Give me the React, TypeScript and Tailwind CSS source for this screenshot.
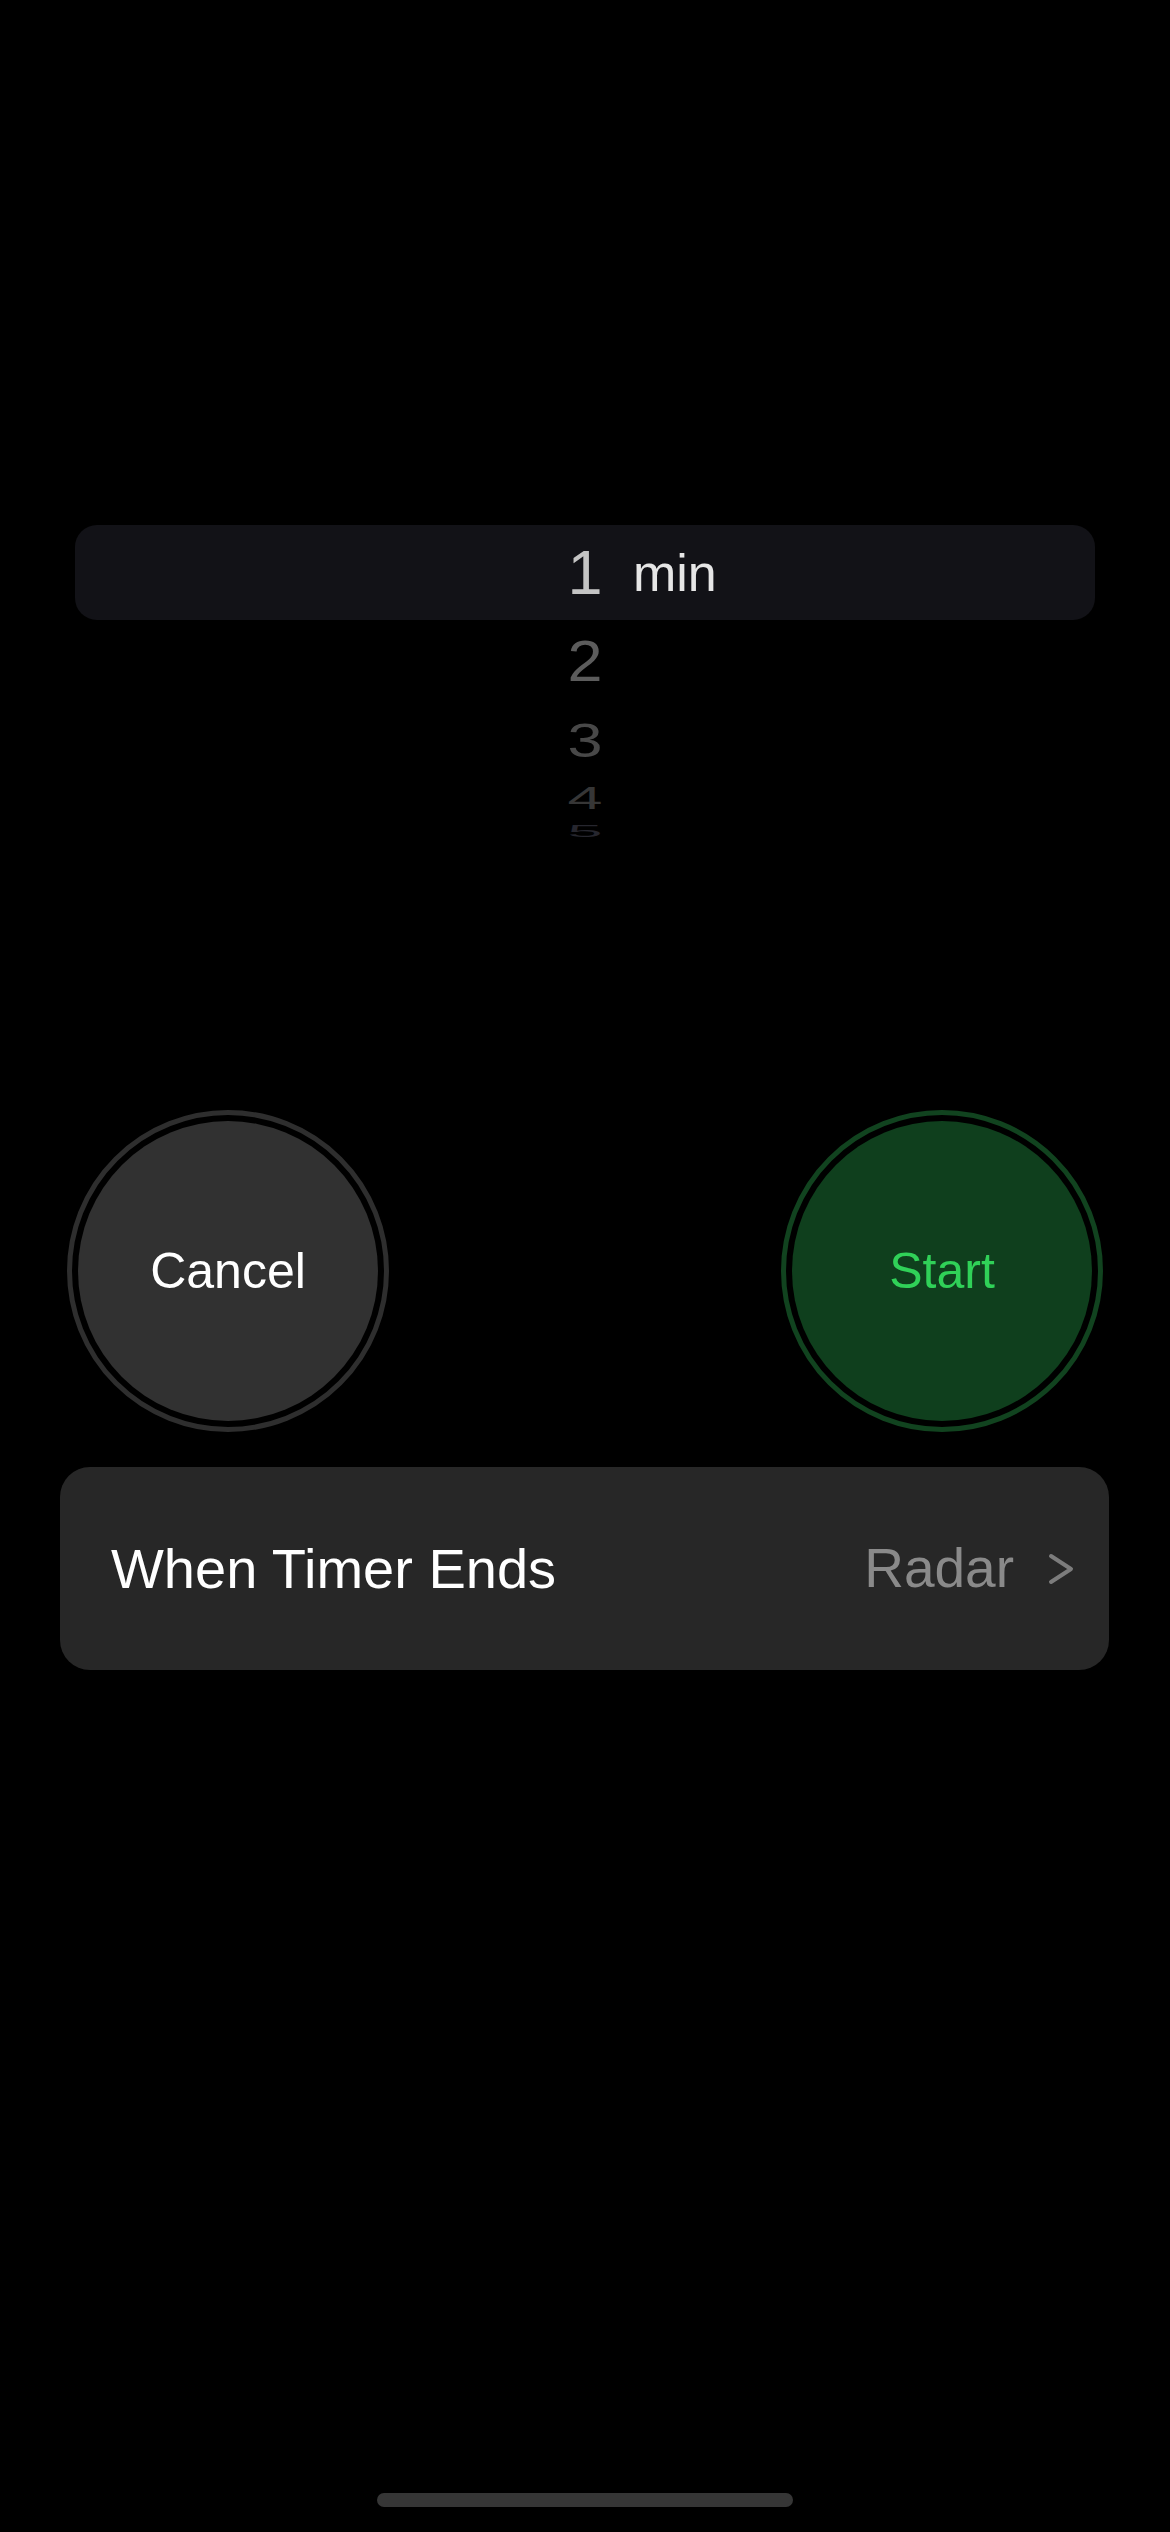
const font = { fontFamily: '"Liberation Sans", Arial, sans-serif' }

// rows below the selected one, squeezed like the iOS wheel
const wheelRows = [
  { n: 2, h: 'h-[82px]', scale: 'scale-y-[0.91]', color: 'text-[#5c5c5c]' },
  { n: 3, h: 'h-[76px]', scale: 'scale-y-[0.76]', color: 'text-[#484848]' },
  { n: 4, h: 'h-[40px]', scale: 'scale-y-[0.49]', color: 'text-[#363636]' },
  { n: 5, h: 'h-[26px]', scale: 'scale-y-[0.27]', color: 'text-[#26262e]' },
]

function RoundButton({ label, variant }: { label: string; variant: 'gray' | 'green' }) {
  const ring = variant === 'gray' ? 'border-[#2e2e2e]' : 'border-[#11431f]'
  const fill = variant === 'gray' ? 'bg-[#313131] text-white' : 'bg-[#0f3f1d] text-[#30d158]'
  return (
    <div className={`w-[322px] h-[322px] rounded-full border-[5px] ${ring} p-[6px]`}>
      <div className={`w-full h-full rounded-full flex items-center justify-center ${fill}`}>
        <span className="text-[50px] leading-none">{label}</span>
      </div>
    </div>
  )
}

export default function App() {
  return (
    <div className="w-[1170px] h-[2532px] bg-black flex flex-col" style={font}>
      {/* picker */}
      <div className="mt-[525px] mx-[75px] flex flex-col">
        <div className="h-[95px] rounded-[22px] bg-[#121217] grid grid-cols-[1fr_70px_1fr] items-center">
          <div />
          <span className="text-center text-[63px] leading-none text-[#c4c4c4]">1</span>
          <span className="pl-[13px] text-[52px] leading-none text-[#e6e6e6]">min</span>
        </div>
        {wheelRows.map((r) => (
          <div key={r.n} className={`${r.h} flex items-center justify-center`}>
            <span className={`w-[70px] text-center text-[63px] leading-none ${r.scale} ${r.color}`}>{r.n}</span>
          </div>
        ))}
      </div>

      {/* buttons */}
      <div className="mt-[266px] px-[67px] flex justify-between">
        <RoundButton label="Cancel" variant="gray" />
        <RoundButton label="Start" variant="green" />
      </div>

      {/* sound row */}
      <div className="mt-[35px] ml-[60px] mr-[61px] h-[203px] rounded-[30px] bg-[#272727] flex items-center pl-[51px] pr-[34px]">
        <span className="text-[56px] leading-none text-white">When Timer Ends</span>
        <span className="ml-auto text-[55px] leading-none text-[#8a8a8a]">Radar</span>
        <svg className="ml-[33px] w-[28px] h-[34px] text-[#7c7c7c]" viewBox="0 0 28 34" fill="none">
          <polyline points="4,4 24,17 4,30" stroke="currentColor" strokeWidth="4" strokeLinecap="round" strokeLinejoin="round" />
        </svg>
      </div>

      <div className="flex-1" />
      <div className="pb-[25px] flex justify-center">
        <div className="w-[416px] h-[14px] rounded-full bg-[#363636]" />
      </div>
    </div>
  )
}
